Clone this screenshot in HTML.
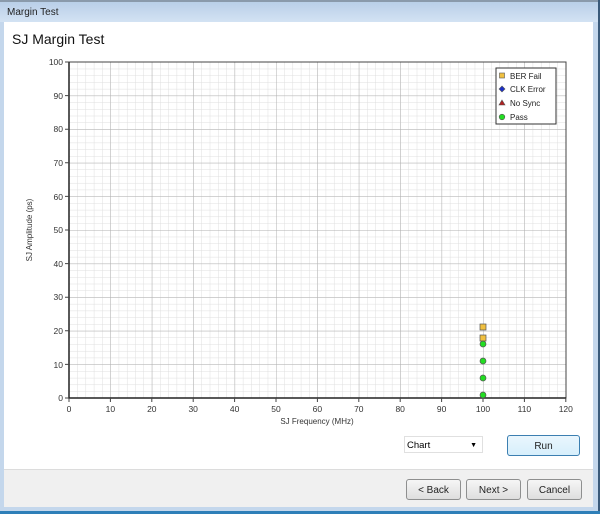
<!DOCTYPE html>
<html><head><style>
body{margin:0;width:600px;height:514px;overflow:hidden;font-family:"Liberation Sans",sans-serif;background:#c4d7ec;position:relative}
.title{position:absolute;left:0;top:0;width:600px;height:22px;background:linear-gradient(#b9cfe8,#d3e2f3);border-top:2px solid #8a9aab;box-sizing:border-box;font-size:10px;color:#222;padding:5px 0 0 7px}
.main{position:absolute;left:4px;top:22px;width:589px;height:447px;background:#fff}
.bar{position:absolute;left:4px;top:469px;width:589px;height:37px;background:#f0f0f0;border-top:1px solid #dcdcdc}
.rb{position:absolute;right:0;top:0;width:2px;height:514px;background:#3a5a7a}
.bb{position:absolute;left:0;bottom:0;width:600px;height:3px;background:#2e7fb8}
h1{position:absolute;left:8px;top:9px;margin:0;font-size:14px;font-weight:normal;color:#111}
.btn{position:absolute;height:21px;border:1px solid #8e8f8f;border-radius:3px;background:linear-gradient(#f6f6f6,#dedede);font-size:10px;text-align:center;line-height:21px;color:#222;box-sizing:border-box}
.sel{position:absolute;left:404px;top:436px;width:79px;height:17px;border:1px solid #e0e0e0;font-size:9.5px;line-height:17px;padding-left:2px;box-sizing:border-box;background:#fff}
</style></head><body>
<div class="title">Margin Test</div>
<div class="main"><h1>SJ Margin Test</h1></div>
<div class="bar"></div>
<div class="rb"></div><div class="bb"></div>
<svg style="position:absolute;left:0;top:0" width="600" height="514">
<defs>
<pattern id="mn" x="69" y="62" width="8.28" height="6.72" patternUnits="userSpaceOnUse"><path d="M0 0V6.72M0 0H8.28" stroke="#dedede" stroke-width="1" fill="none"/></pattern>
<pattern id="mj" x="69" y="62" width="41.4" height="33.6" patternUnits="userSpaceOnUse"><path d="M0 0V33.6M0 0H41.4" stroke="#b0b0b0" stroke-width="1" fill="none"/></pattern>
</defs>
<rect x="69" y="62" width="497" height="336" fill="#fff"/>
<rect x="69" y="62" width="497" height="336" fill="url(#mn)"/>
<rect x="69" y="62" width="497" height="336" fill="url(#mj)"/>
<rect x="69" y="62" width="497" height="336" fill="none" stroke="#444" stroke-width="1"/>
<path d="M69 62V398H566" stroke="#222" stroke-width="1.5" fill="none"/>
<g font-size="8.5" fill="#333" text-anchor="end">
<text x="63" y="65">100</text><text x="63" y="99">90</text><text x="63" y="132">80</text><text x="63" y="166">70</text><text x="63" y="200">60</text><text x="63" y="233">50</text><text x="63" y="267">40</text><text x="63" y="300">30</text><text x="63" y="334">20</text><text x="63" y="368">10</text><text x="63" y="401">0</text>
</g>
<g stroke="#444"><path d="M65 62H69M65 95.6H69M65 129.2H69M65 162.8H69M65 196.4H69M65 230H69M65 263.6H69M65 297.2H69M65 330.8H69M65 364.4H69M65 398H69"/><path d="M69 398V402M110.4 398V402M151.8 398V402M193.2 398V402M234.6 398V402M276 398V402M317.4 398V402M358.8 398V402M400.2 398V402M441.6 398V402M483 398V402M524.4 398V402M565.8 398V402"/></g>
<g font-size="8.5" fill="#333" text-anchor="middle">
<text x="69" y="412">0</text><text x="110.4" y="412">10</text><text x="151.8" y="412">20</text><text x="193.2" y="412">30</text><text x="234.6" y="412">40</text><text x="276" y="412">50</text><text x="317.4" y="412">60</text><text x="358.8" y="412">70</text><text x="400.2" y="412">80</text><text x="441.6" y="412">90</text><text x="483" y="412">100</text><text x="524.4" y="412">110</text><text x="565.8" y="412">120</text>
<text x="317" y="424" font-size="8">SJ Frequency (MHz)</text>
<text transform="translate(32 230) rotate(-90)" font-size="8">SJ Amplitude (ps)</text>
</g>
<g stroke="#555" stroke-width="0.7">
<rect x="480" y="324" width="6" height="6" fill="#f0c040"/>
<rect x="480" y="335" width="6" height="6" fill="#f0c040"/>
<circle cx="483" cy="344" r="3" fill="#22dd22"/><circle cx="483" cy="361" r="3" fill="#22dd22"/><circle cx="483" cy="378" r="3" fill="#22dd22"/><circle cx="483" cy="395" r="3" fill="#22dd22"/>
</g>
<rect x="496" y="68" width="60" height="56" fill="#fff" stroke="#333"/>
<g stroke="#555" stroke-width="0.6">
<rect x="499.5" y="73" width="5" height="5" fill="#f0c040"/>
<path d="M502 86L505 89L502 92L499 89Z" fill="#1a2fc8"/>
<path d="M502 100L505 105H499Z" fill="#b02020"/>
<circle cx="502" cy="117" r="2.8" fill="#22dd22"/>
</g>
<g font-size="8" fill="#222"><text x="510" y="79">BER Fail</text><text x="510" y="92">CLK Error</text><text x="510" y="106">No Sync</text><text x="510" y="120">Pass</text></g>
</svg>
<div class="sel">Chart<span style="position:absolute;right:5px;top:0;font-size:7px">▼</span></div>
<div class="btn" style="left:507px;top:435px;width:73px;border-color:#3c7fb1;background:linear-gradient(#eaf6fd,#d7effc)">Run</div>
<div class="btn" style="left:406px;top:479px;width:55px">&lt; Back</div>
<div class="btn" style="left:466px;top:479px;width:55px">Next &gt;</div>
<div class="btn" style="left:527px;top:479px;width:55px">Cancel</div>
</body></html>
